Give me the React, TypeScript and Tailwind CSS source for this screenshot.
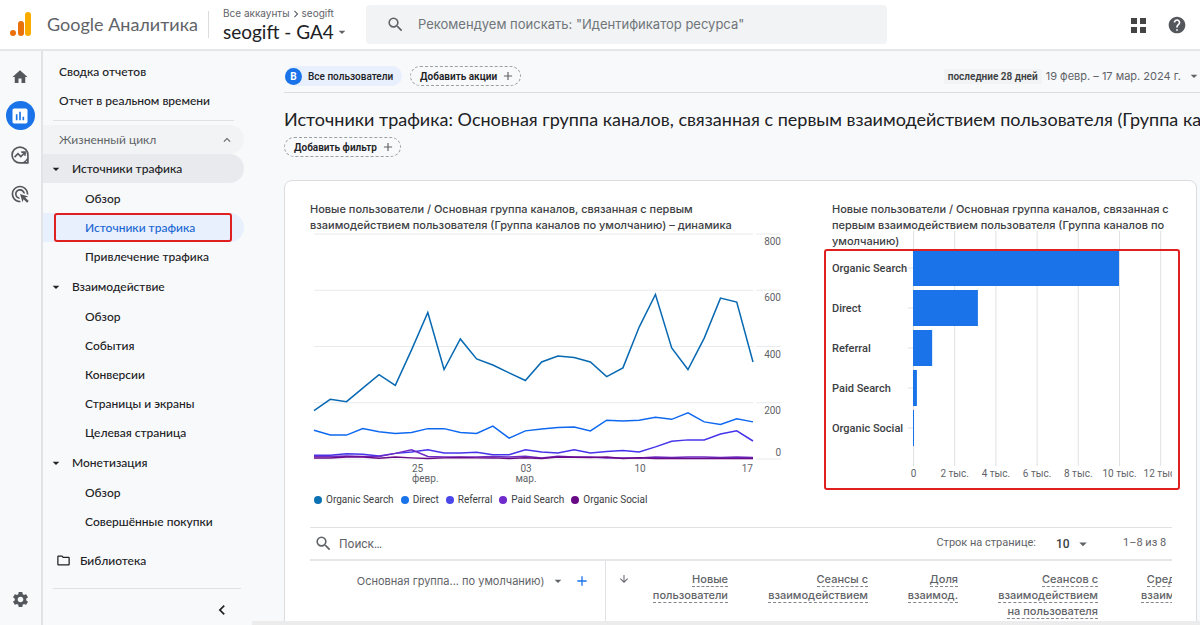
import { clsx } from 'clsx'
import {
  MdAdd,
  MdAdsClick,
  MdArrowDownward,
  MdArrowDropDown,
  MdChevronLeft,
  MdChevronRight,
  MdExpandLess,
  MdHelp,
  MdHome,
  MdInsertChart,
  MdOutlineFolder,
  MdSearch,
  MdSettings
} from 'react-icons/md'

type Series = { name: string; color: string; dot: string; values: number[] }

const series: Series[] = [
  {
    name: 'Organic Search',
    color: '#0769b2',
    dot: 'bg-[#0b71b3]',
    values: [172, 212, 204, 252, 300, 262, 388, 521, 318, 427, 356, 334, 306, 279, 345, 366, 361, 345, 293, 324, 469, 585, 395, 318, 430, 572, 558, 345]
  },
  {
    name: 'Direct',
    color: '#0f68f0',
    dot: 'bg-[#1a73e8]',
    values: [102, 85, 85, 108, 97, 91, 94, 108, 108, 94, 91, 117, 74, 100, 107, 112, 114, 100, 138, 135, 138, 148, 141, 164, 132, 123, 143, 132]
  },
  {
    name: 'Referral',
    color: '#4534ea',
    dot: 'bg-[#4a47e8]',
    values: [13, 13, 19, 17, 11, 20, 25, 33, 21, 21, 24, 15, 15, 33, 25, 21, 33, 21, 27, 30, 25, 43, 63, 68, 68, 89, 100, 64]
  },
  {
    name: 'Paid Search',
    color: '#6f2bc6',
    dot: 'bg-[#6f2bcb]',
    values: [9, 9, 11, 9, 9, 20, 33, 9, 7, 7, 7, 9, 7, 10, 4, 10, 7, 7, 4, 4, 4, 7, 5, 7, 7, 5, 7, 5]
  },
  {
    name: 'Organic Social',
    color: '#6a0a86',
    dot: 'bg-[#680a86]',
    values: [4, 4, 7, 7, 3, 7, 4, 2, 4, 5, 4, 4, 2, 4, 2, 7, 6, 5, 7, 2, 4, 2, 2, 2, 2, 2, 2, 2]
  }
]

const channels = [
  { name: 'Organic Search', value: 10000 },
  { name: 'Direct', value: 3150 },
  { name: 'Referral', value: 930 },
  { name: 'Paid Search', value: 190 },
  { name: 'Organic Social', value: 50 }
]

const navGroups = [
  { title: 'Источники трафика', open: true, items: ['Обзор', 'Источники трафика', 'Привлечение трафика'] },
  { title: 'Взаимодействие', items: ['Обзор', 'События', 'Конверсии', 'Страницы и экраны', 'Целевая страница'] },
  { title: 'Монетизация', items: ['Обзор', 'Совершённые покупки'] }
]

const columns = [
  { lines: ['Новые', 'пользователи'], width: 'w-[135px]', sorted: true },
  { lines: ['Сеансы с', 'взаимодействием'], width: 'w-[140px]' },
  { lines: ['Доля', 'взаимод.'], width: 'w-[90px]' },
  { lines: ['Сеансов с', 'взаимодействием', 'на пользователя'], width: 'w-[140px]' },
  { lines: ['Среднее время', 'взаимодействия'], width: 'w-[134px]' }
]

function ExploreIcon() {
  return (
    <svg viewBox="0 0 24 24" className="w-5 h-5" fill="none" stroke="currentColor" strokeWidth="2">
      <path d="M12 2.5a9.5 9.5 0 1 0 0 19h9.5V12A9.5 9.5 0 0 0 12 2.5z" strokeLinejoin="round" />
      <path d="M21 16.5a10 10 0 0 1-4.5 4.5" />
      <path d="M5.5 14.5l4-4 3.5 3.5 5-5" />
      <path d="M13.5 8.5h4.5V13" />
    </svg>
  )
}

function Logo() {
  return (
    <svg viewBox="0 0 22 25" className="w-[22px] h-[25px] shrink-0">
      <rect x="15" y="0" width="6" height="24" rx="3" fill="#f9ab00" />
      <rect x="8" y="9" width="6" height="15" rx="3" fill="#e8710a" />
      <circle cx="3" cy="21" r="3" fill="#e8710a" />
    </svg>
  )
}

function Header() {
  return (
    <header className="flex items-center h-[51px] shrink-0 bg-white border-b-2 border-[#e4e6ea] pl-[10px] pr-[13px]">
      <Logo />
      <span className="ml-[15px] w-[149px] font-['Lato',sans-serif] text-[18px] text-[#5f6368] whitespace-nowrap">Google Аналитика</span>
      <div className="ml-3 h-[27px] w-px bg-[#dadce0]" />
      <div className="ml-[14px] w-[143px] shrink-0">
        <div className="flex items-center text-[10px] leading-[13px] text-[#5f6368]">
          Все аккаунты
          <MdChevronRight className="-mx-px w-[14px] h-[14px]" />
          seogift
        </div>
        <button className="flex items-center font-['Lato',sans-serif] text-[19px] leading-[22px] text-[#202124] whitespace-nowrap">
          seogift - GA4
          <MdArrowDropDown className="w-4 h-4 text-[#5f6368]" />
        </button>
      </div>
      <label className="flex items-center flex-1 max-w-[521px] h-[39px] rounded bg-[#f1f3f4] pl-5">
        <MdSearch className="w-[19px] h-[19px] text-[#5f6368]" />
        <input
          type="search"
          aria-label="Поиск"
          placeholder={'Рекомендуем поискать: "Идентификатор ресурса"'}
          className="ml-[13px] flex-1 bg-transparent text-[13px] outline-none placeholder:text-[#70757a]"
        />
      </label>
      <div className="ml-auto flex items-center gap-[21px]">
        <button aria-label="Приложения">
          <svg viewBox="0 0 16 16" className="w-4 h-4" fill="#444">
            <path d="M1 1h6v6H1zM10 1h6v6h-6zM1 10h6v6H1zM10 10h6v6h-6z" />
          </svg>
        </button>
        <button aria-label="Справка">
          <MdHelp className="w-5 h-5 text-[#54585d]" />
        </button>
      </div>
    </header>
  )
}

function Rail() {
  return (
    <nav className="flex flex-col items-center w-[43px] shrink-0 border-r-2 border-[#e1e3e6] pt-4 pr-px pb-4 text-[#54585d]">
      <a href="#home" aria-label="Главная" className="flex items-center h-5">
        <MdHome className="w-[18px] h-[18px]" />
      </a>
      <a href="#reports" aria-label="Отчеты" className="mt-[14px] flex items-center justify-center w-[29px] h-[29px] rounded-full bg-[#1a73e8] text-white">
        <MdInsertChart className="w-5 h-5" />
      </a>
      <a href="#explore" aria-label="Исследования" className="mt-[15px]">
        <ExploreIcon />
      </a>
      <a href="#ads" aria-label="Реклама" className="mt-[19px]">
        <MdAdsClick className="w-5 h-5" />
      </a>
      <a href="#admin" aria-label="Администратор" className="mt-auto">
        <MdSettings className="w-[19px] h-[19px]" />
      </a>
    </nav>
  )
}

function Sidebar() {
  return (
    <aside className="flex flex-col w-[209px] shrink-0 font-['Lato',sans-serif] text-xs font-medium text-[#202124] pt-[6px]">
      <a href="#snapshot" className="flex items-center h-[29px] pl-4">Сводка отчетов</a>
      <a href="#realtime" className="flex items-center h-[29px] pl-4">Отчет в реальном времени</a>
      <div className="ml-[10px] mr-[18px] mt-[5px] mb-1 h-px bg-[#dfe1e5]" />
      <button className="flex items-center justify-between h-[29px] mr-2 pl-4 pr-[10px] rounded-r-full bg-[#f1f3f4] font-normal text-[#5f6368]">
        Жизненный цикл
        <MdExpandLess className="w-[14px] h-[14px]" />
      </button>
      <div className="flex flex-col gap-px">
        {navGroups.map((group) => (
          <div key={group.title}>
            <button
              className={clsx('flex items-center w-[201px] h-[29px] mb-px pl-[5px] rounded-r-full', group.open && 'bg-[#e8eaed]')}
            >
              <MdArrowDropDown className="w-4 h-4" />
              <span className="ml-2">{group.title}</span>
            </button>
            {group.items.map((item) => {
              const active = item === 'Источники трафика'
              return (
                <a
                  key={item}
                  href="#report"
                  className={clsx(
                    'relative flex items-center h-[29px] mr-2 pl-[42px] rounded-r-full',
                    active && 'bg-[#e8f0fe] text-[#1967d2]'
                  )}
                >
                  {item}
                  {active && <span className="absolute inset-y-0 left-[11px] right-3 rounded-[3px] border-2 border-[#e02020]" />}
                </a>
              )
            })}
          </div>
        ))}
      </div>
      <a href="#library" className="mt-[10px] flex items-center h-[29px] pl-[13px]">
        <MdOutlineFolder className="w-[15px] h-[15px]" />
        <span className="ml-[9px]">Библиотека</span>
      </a>
      <div className="mt-[13px] ml-[10px] mr-[11px] h-px bg-[#dfe1e5]" />
      <button aria-label="Свернуть меню" className="self-end mr-5 mt-[11px]">
        <MdChevronLeft className="w-5 h-5" />
      </button>
    </aside>
  )
}

const addChip =
  "flex items-center h-5 pl-[9px] pr-[5px] rounded-full border border-dashed border-[#9aa0a6] font-['Roboto',sans-serif] text-[10px] font-semibold whitespace-nowrap"

function TrendChart() {
  const x = (i: number) => 4 + (i * 439) / 27
  const y = (v: number) => 226 - (v * 225) / 800
  const ticks = [800, 600, 400, 200, 0]
  return (
    <svg viewBox="0 0 472 254" className="block w-full font-['Roboto'] text-[10px]" fill="#5f6368">
      {ticks.map((t) => (
        <g key={t}>
          <path d={`M4 ${y(t)}H443M446 ${y(t)}H471`} stroke="#e8eaed" />
          <text x="471" y={t === 0 ? 223 : y(t) + 11} textAnchor="end">{t}</text>
        </g>
      ))}
      {series.map((s) => (
        <polyline
          key={s.name}
          points={s.values.map((v, i) => `${x(i)},${y(v)}`).join(' ')}
          fill="none"
          stroke={s.color}
          strokeWidth="1.5"
        />
      ))}
      <text x="102" y="239">25</text>
      <text x="102" y="249">февр.</text>
      <text x="216" y="239" textAnchor="middle">03</text>
      <text x="216" y="249" textAnchor="middle">мар.</text>
      <text x="330" y="239" textAnchor="middle">10</text>
      <text x="443" y="239" textAnchor="end">17</text>
    </svg>
  )
}

function ChannelChart() {
  const x = (v: number) => 81.5 + v * 0.0206
  return (
    <svg viewBox="0 0 340 252" className="block w-full font-['Roboto'] text-[10px]" fill="#5f6368">
      {[0, 2, 4, 6, 8, 10, 12].map((t) => (
        <g key={t}>
          <path d={`M${x(t * 1000)} 0V235`} stroke="#dfe1e5" />
          <text x={x(t * 1000)} y="246" textAnchor="middle">{t === 0 ? '0' : `${t} тыс.`}</text>
        </g>
      ))}
      {channels.map((c, i) => (
        <g key={c.name}>
          <path d={`M76 ${37 + i * 40}h5`} stroke="#dfe1e5" />
          <rect x="81" y={19 + i * 40} width={c.value * 0.0206} height="36" fill="#1a73e8" />
          <text x="0" y={41 + i * 40} fontWeight="500" fill="#3c4043" className="text-[11px]">{c.name}</text>
        </g>
      ))}
    </svg>
  )
}

function ReportTable() {
  return (
    <div className="mt-5 overflow-hidden text-[11px] text-[#5f6368]">
      <div className="flex items-center h-[34px] border-t border-b-2 border-t-[#dfe1e5] border-b-[#e4e6ea] pl-1 font-['Roboto',sans-serif]">
        <label className="flex items-center flex-1">
          <MdSearch className="w-[19px] h-[19px]" />
          <input aria-label="Поиск по таблице" placeholder="Поиск…" className="ml-[6px] flex-1 text-xs outline-none placeholder:text-[#5f6368]" />
        </label>
        <label htmlFor="rows">Строк на странице:</label>
        <div className="flex items-center ml-5 w-[67px] text-xs text-[#3c4043] font-medium">
          <select id="rows" defaultValue="10" className="appearance-none w-[18px] outline-none">
            <option>10</option>
            <option>25</option>
          </select>
          <MdArrowDropDown className="w-[18px] h-[18px] text-[#5f6368]" />
        </div>
        <span className="w-[49px]">1–8 из 8</span>
      </div>
      <table className="table-fixed w-[934px] font-medium">
        <thead>
          <tr className="align-top">
            <th className="w-[295px] h-[70px] pt-3 pr-[15px] font-normal">
              <div className="flex items-center justify-end">
                <button className="flex items-center">
                  Основная группа... по умолчанию)
                  <MdArrowDropDown className="ml-[5px] w-4 h-4" />
                </button>
                <button aria-label="Добавить параметр" className="ml-[8px]">
                  <MdAdd className="w-4 h-4 text-[#1a73e8]" />
                </button>
              </div>
            </th>
            {columns.map((col) => (
              <th
                key={col.lines.join(' ')}
                className={clsx('pt-[10px] pr-3 font-medium leading-4 text-right whitespace-nowrap', col.width, col.sorted && 'border-l border-[#dfe1e5]')}
              >
                <div className="flex items-start">
                  {col.sorted && <MdArrowDownward className="ml-3 mt-[2px] w-3 h-3" />}
                  <div className="flex-1">
                    {col.lines.map((line) => (
                      <div key={line}>
                        <span className="border-b border-dashed border-[#80868b]">{line}</span>
                      </div>
                    ))}
                  </div>
                </div>
              </th>
            ))}
          </tr>
        </thead>
      </table>
    </div>
  )
}

export default function App() {
  return (
    <div className="flex flex-col h-screen overflow-hidden bg-[#f8f9fb] font-['Inter',sans-serif]">
      <Header />
      <div className="flex flex-1 min-h-0">
        <Rail />
        <Sidebar />
        <main className="flex flex-col flex-1 min-w-0">
          <div className="flex-1 min-h-0 overflow-hidden pl-8 text-[#202124]">
            {/* Comparisons and date range */}
            <div className="flex items-center h-[42px] pt-[9px] border-b border-[#dadce0] font-['Roboto',sans-serif]">
              <div className="flex items-center h-5 ml-px pr-[9px] rounded-full bg-[#e8f0fe] text-[10px] font-medium whitespace-nowrap">
                <span className="flex items-center justify-center w-[17px] h-[17px] mr-[6px] rounded-full bg-[#1a73e8] font-bold text-white">В</span>
                Все пользователи
              </div>
              <button className={clsx(addChip, 'ml-2')}>
                Добавить акции
                <MdAdd className="ml-1 w-[14px] h-[14px] text-[#5f6368]" />
              </button>
              <button className="flex items-center ml-auto text-[#5f6368] whitespace-nowrap">
                <span className="px-1 bg-[#f1f3f4] text-[10px] font-semibold text-[#3c4043]">последние 28 дней</span>
                <span className="ml-1 font-['Inter',sans-serif] text-[11px]">19 февр. – 17 мар. 2024 г.</span>
                <MdArrowDropDown className="ml-[5px] -mr-[2px] w-4 h-4" />
              </button>
            </div>

            <h1 className="mt-[14px] font-['Lato',sans-serif] text-[18px] leading-6 whitespace-nowrap">
              Источники трафика: Основная группа каналов, связанная с первым взаимодействием пользователя (Группа каналов по умолчанию)
            </h1>
            <button className={clsx(addChip, 'mt-[6px]')}>
              Добавить фильтр
              <MdAdd className="ml-1 w-[14px] h-[14px] text-[#5f6368]" />
            </button>

            <section className="mt-[23px] mr-[3px] pt-5 pl-[25px] pr-6 rounded-t-lg bg-white border border-[#dadce0]">
              <div className="grid grid-cols-[472fr_340fr] gap-[50px]">
                <div>
                  <h2 className="text-[11px] leading-4 font-medium text-[#3c4043]">
                    Новые пользователи / Основная группа каналов, связанная с первым взаимодействием пользователя (Группа каналов по умолчанию) – динамика
                  </h2>
                  <TrendChart />
                  <ul className="mt-[6px] ml-1 flex gap-[7px] text-[10px] leading-[14px] font-['Roboto'] text-[#3c4043]">
                    {series.map((s) => (
                      <li key={s.name} className="flex items-center gap-1">
                        <span className={clsx('w-2 h-2 rounded-full', s.dot)} />
                        {s.name}
                      </li>
                    ))}
                  </ul>
                </div>
                <div className="relative">
                  <h2 className="relative z-10 text-[11px] leading-4 font-medium text-[#3c4043]">
                    Новые пользователи / Основная группа каналов, связанная с первым взаимодействием пользователя (Группа каналов по умолчанию)
                  </h2>
                  <div className="-mt-[18px]">
                    <ChannelChart />
                  </div>
                  <div className="absolute top-[48px] -left-2 -right-2 h-[241px] rounded-[3px] border-2 border-[#e02020]" />
                </div>
              </div>
              <ReportTable />
            </section>
          </div>
          <div className="h-1 shrink-0 bg-[#ececec]" />
        </main>
      </div>
    </div>
  )
}
